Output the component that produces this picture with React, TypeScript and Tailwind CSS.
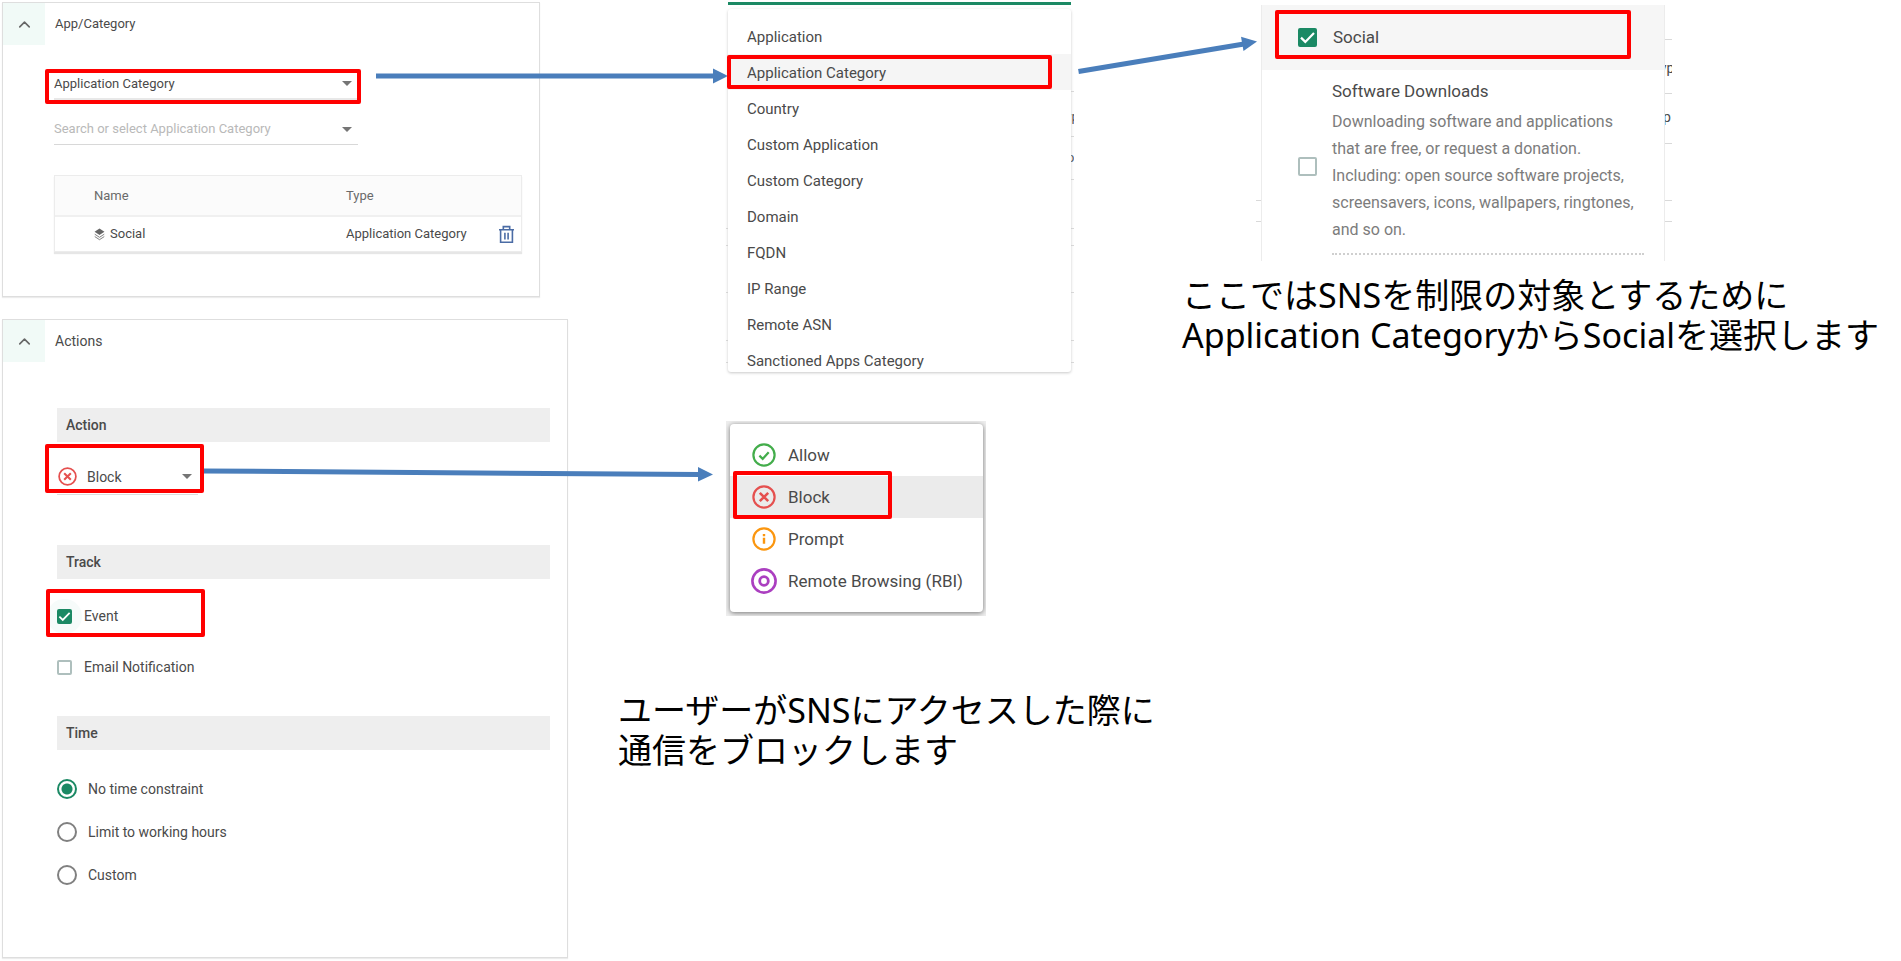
import { useState, type ReactNode } from "react";
import { ChevronUp } from "lucide-react";
import clsx from "clsx";

const CATEGORY_OPTIONS = [
  "Application",
  "Application Category",
  "Country",
  "Custom Application",
  "Custom Category",
  "Domain",
  "FQDN",
  "IP Range",
  "Remote ASN",
  "Sanctioned Apps Category",
];

const TIME_OPTIONS = ["No time constraint", "Limit to working hours", "Custom"];

function Caret() {
  return (
    <svg viewBox="0 0 10 5" className="pointer-events-none absolute right-[6px] h-[5px] w-[10px]" aria-hidden="true">
      <path d="M0 0h10L5 5z" fill="#757575" />
    </svg>
  );
}

// Red frame around the control the reader has to look at
function Highlight({ className }: { className: string }) {
  return (
    <span
      aria-hidden="true"
      className={clsx("pointer-events-none absolute z-10 rounded-[2px] border-4 border-[#ff0000]", className)}
    />
  );
}

function AllowIcon() {
  return (
    <svg viewBox="0 0 24 24" className="size-6" fill="none" stroke="#43ad4b" strokeWidth="2.2" aria-hidden="true">
      <circle cx="12" cy="12" r="10.6" />
      <path d="M7.4 12.6l3.3 3.2 6-6.6" />
    </svg>
  );
}

function BlockIcon({ className }: { className: string }) {
  return (
    <svg viewBox="0 0 24 24" className={className} fill="none" stroke="#e5504f" strokeWidth="2.2" aria-hidden="true">
      <circle cx="12" cy="12" r="10.6" />
      <path d="M7.8 7.800l8.400 8.400M16.200 7.800l-8.400 8.400" strokeWidth="2.6" />
    </svg>
  );
}

function PromptIcon() {
  return (
    <svg viewBox="0 0 24 24" className="size-6" fill="none" stroke="#fb960f" strokeWidth="2.2" aria-hidden="true">
      <circle cx="12" cy="12" r="10.6" />
      <path d="M12 10.8v6M12 7v2.2" strokeWidth="2.4" />
    </svg>
  );
}

function RemoteIcon() {
  return (
    <svg viewBox="0 0 26 26" className="-mx-px size-[26px]" fill="none" stroke="#ab3fc0" aria-hidden="true">
      <circle cx="13" cy="13" r="11.600" strokeWidth="2.6" />
      <circle cx="13" cy="13" r="4.3" strokeWidth="2.8" />
    </svg>
  );
}

function LayersIcon() {
  return (
    <svg viewBox="0 0 12 14" className="h-[14px] w-[11px]" aria-hidden="true">
      <path d="M6 1l5.4 3.6L6 8.2.6 4.6z" fill="#666" />
      <path d="M.8 7.2L6 10.6l5.2-3.4M.8 9.8L6 13.2l5.2-3.4" fill="none" stroke="#777" />
    </svg>
  );
}

function TrashIcon() {
  return (
    <svg viewBox="0 0 16 20" className="h-[19px] w-[15px]" fill="none" stroke="#4b6ca5" strokeWidth="1.7" aria-hidden="true">
      <path d="M0 5h16M4.6 5V1.6h6.8V5M1.7 5v13.2h12.6V5M6.3 8v7.2M9.7 8v7.2" />
    </svg>
  );
}

interface CheckboxProps {
  label: string;
  defaultChecked?: boolean;
  large?: boolean;
}

function Checkbox({ label, defaultChecked = false, large = false }: CheckboxProps) {
  const [checked, setChecked] = useState(defaultChecked);
  return (
    <span className={clsx("relative block shrink-0", large ? "size-[19px]" : "size-[15px]")}>
      <input
        type="checkbox"
        aria-label={label}
        checked={checked}
        onChange={(e) => setChecked(e.target.checked)}
        className="block size-full appearance-none rounded-[2px] border-2 border-[#aebfbd] bg-white checked:border-[#1b8964] checked:bg-[#1b8964]"
      />
      {checked && (
        <svg viewBox="0 0 19 19" className="pointer-events-none absolute inset-0 size-full" aria-hidden="true">
          <path d="M3 9.6l4.3 4.3L16 5" fill="none" stroke="#fff" strokeWidth="2.2" />
        </svg>
      )}
    </span>
  );
}

interface PanelProps {
  title: string;
  className: string;
  children: ReactNode;
}

function Panel({ title, className, children }: PanelProps) {
  return (
    <section className={clsx("border border-[#dedede] bg-white shadow-[0_1px_1px_#ececec]", className)}>
      <header className="flex items-center gap-[10px]">
        <button type="button" aria-label={`Collapse ${title}`} className="flex h-[42px] w-[42px] items-center justify-center bg-[#f1faf7]">
          <ChevronUp className="size-[19px] text-[#666]" strokeWidth={2} />
        </button>
        <h2>{title}</h2>
      </header>
      {children}
    </section>
  );
}

function SectionBar({ children }: { children: ReactNode }) {
  return <h3 className="flex h-[34px] items-center bg-[#eee] px-[9px] font-medium">{children}</h3>;
}

function AppCategoryPanel() {
  return (
    <Panel title="App/Category" className="mr-[28px] pb-[44px]">
      <div className="pt-[24px] pr-[17px] pl-[51px]">
        <div className="relative flex h-[31px] w-[304px] items-center border-b-2 border-[#e8e8e8]">
          <select aria-label="Object type" defaultValue="Application Category" className="w-full appearance-none outline-none">
            {CATEGORY_OPTIONS.map((name) => (
              <option key={name}>{name}</option>
            ))}
          </select>
          <Caret />
          <Highlight className="top-0 -right-[3px] -bottom-[6px] -left-[9px]" />
        </div>
        <div className="relative mt-[14px] flex h-[31px] w-[304px] items-center border-b border-[#d8d8d8]">
          <input
            type="text"
            aria-label="Application Category"
            placeholder="Search or select Application Category"
            className="w-full outline-none placeholder:text-[#b9b9b9]"
          />
          <Caret />
        </div>
        <div className="mt-[30px] border border-[#ececec] shadow-[0_2px_1px_#e6e6e6]">
          <table className="w-full table-fixed text-left">
            <thead>
              <tr className="h-[40px] border-b-2 border-[#f0f0f0] bg-[#fbfbfb] text-[#6a6a6a]">
                <th className="w-[291px] pl-[39px] font-normal">Name</th>
                <th className="font-normal">Type</th>
                <th className="w-[22px]" aria-label="Remove" />
              </tr>
            </thead>
            <tbody>
              <tr className="h-[35px]">
                <td className="pl-[39px]">
                  <span className="flex items-center gap-[5px]">
                    <LayersIcon />
                    Social
                  </span>
                </td>
                <td className="whitespace-nowrap">Application Category</td>
                <td>
                  <button type="button" aria-label="Remove Social" className="block">
                    <TrashIcon />
                  </button>
                </td>
              </tr>
            </tbody>
          </table>
        </div>
      </div>
    </Panel>
  );
}

function ActionsPanel() {
  return (
    <Panel title="Actions" className="pb-[72px] text-[14px]">
      <div className="pt-[46px] pr-[17px] pl-[54px]">
        <SectionBar>Action</SectionBar>
        <div className="relative mt-[17px] flex h-[36px] w-[141px] items-center border-b border-[#dcdcdc]">
          <BlockIcon className="absolute left-px size-[19px]" />
          <select aria-label="Action" defaultValue="Block" className="w-full appearance-none pl-[30px] outline-none">
            <option>Allow</option>
            <option>Block</option>
            <option>Prompt</option>
            <option>Remote Browsing (RBI)</option>
          </select>
          <Caret />
          <Highlight className="-top-[15px] -right-[6px] bottom-px -left-[12px]" />
        </div>

        <div className="mt-[50px]">
          <SectionBar>Track</SectionBar>
        </div>
        <label className="relative mt-[27px] flex h-[20px] w-fit items-center gap-[12px]">
          <span aria-hidden="true" className="absolute -left-[10px] size-[35px] rounded-full bg-[#f6fbfa]" />
          <Checkbox label="Event" defaultChecked />
          <span className="relative">Event</span>
          <Highlight className="-top-[17px] -bottom-[11px] -left-[11px] w-[159px]" />
        </label>
        <label className="mt-[31px] flex h-[20px] w-fit items-center gap-[12px]">
          <Checkbox label="Email Notification" />
          Email Notification
        </label>

        <div className="mt-[39px]">
          <SectionBar>Time</SectionBar>
        </div>
        <div className="mt-[29px] flex flex-col gap-[23px]">
          {TIME_OPTIONS.map((name, index) => (
            <label key={name} className="flex h-[20px] w-fit items-center gap-[11px]">
              <input
                type="radio"
                name="time"
                defaultChecked={index === 0}
                className="size-[20px] appearance-none rounded-full border-2 border-[#808080] bg-white checked:border-[#1b8964] checked:bg-[radial-gradient(circle,#1b8964_5px,white_6px)]"
              />
              {name}
            </label>
          ))}
        </div>
      </div>
    </Panel>
  );
}

// Hairlines of the page underneath, peeking out beside an open menu
function EdgeTicks({ tops, className }: { tops: number[]; className: string }) {
  return (
    <span aria-hidden="true" className={clsx("absolute top-0 h-full", className)}>
      {tops.map((top) => (
        <span key={top} className="absolute left-0 h-px w-full bg-[#d9d9d9]" style={{ top }} />
      ))}
    </span>
  );
}

function CategoryMenu() {
  return (
    <div className="relative ml-[110px] w-[343px] text-[15px] leading-[18px]">
      <svg viewBox="0 0 352 16" className="absolute top-[66px] right-full h-[16px] w-[352px]" aria-hidden="true">
        <path d="M0 8h338" stroke="#4a7ebb" strokeWidth="5" />
        <path d="M337 .5L352 8l-15 7.5z" fill="#4a7ebb" />
      </svg>
      <div className="h-[3px] bg-[#1b8964]" />
      <EdgeTicks tops={[226, 243, 290, 338, 360]} className="right-full w-[2px]" />
      <EdgeTicks tops={[89, 134, 177, 226, 243, 290, 338, 360]} className="left-full w-[3px]" />
      <span aria-hidden="true" className="absolute top-[106px] left-full w-[3px] overflow-hidden text-[13px]">
        <span className="-ml-[13px]">Type</span>
      </span>
      <span aria-hidden="true" className="absolute top-[147px] left-full w-[3px] overflow-hidden text-[13px]">
        <span className="-ml-[4px]">p</span>
      </span>
      <div role="listbox" aria-label="Object type" className="relative mt-[4px] flex flex-col rounded-[3px] bg-white pt-[9px] shadow-[0_1px_3px_#c9c9c9]">
        {CATEGORY_OPTIONS.map((name) => {
          const selected = name === "Application Category";
          return (
            <button
              key={name}
              type="button"
              role="option"
              aria-selected={selected}
              className={clsx("relative flex h-9 items-start pt-[10px] pl-[19px] text-left last:h-[30px]", selected && "bg-[#f5f5f5]")}
            >
              {name}
              {selected && <Highlight className="top-px right-[19px] bottom-px -left-px" />}
            </button>
          );
        })}
      </div>
    </div>
  );
}

const ACTION_OPTIONS = [
  { name: "Allow", icon: <AllowIcon /> },
  { name: "Block", icon: <BlockIcon className="size-6" /> },
  { name: "Prompt", icon: <PromptIcon /> },
  { name: "Remote Browsing (RBI)", icon: <RemoteIcon /> },
];

function ActionMenu() {
  return (
    <div className="relative mt-[49px] ml-[108px] w-[260px]">
      <svg viewBox="0 0 510 16" className="absolute top-[45px] right-full mr-[13px] h-[16px] w-[510px]" aria-hidden="true">
        <path d="M0 5l496 3.500" stroke="#4a7ebb" strokeWidth="5" />
        <path d="M495 1l15 7.5-15 7z" fill="#4a7ebb" />
      </svg>
      <div className="overflow-hidden bg-[#eee] pt-[3px] pr-[3px] pb-[4px] pl-[4px]">
        <div
          role="listbox"
          aria-label="Action"
          className="flex flex-col rounded-[4px] bg-white pt-[10px] pb-[10px] text-[17px] leading-[20px] shadow-[0_1px_5px_#777]"
        >
          {ACTION_OPTIONS.map(({ name, icon }) => {
            const selected = name === "Block";
            return (
              <button
                key={name}
                type="button"
                role="option"
                aria-selected={selected}
                className={clsx("relative flex h-[42px] items-center gap-[12px] pl-[22px]", selected && "bg-[#ebebeb]")}
              >
                {icon}
                {name}
                {selected && <Highlight className="-top-[5px] -bottom-px left-[3px] w-[159px]" />}
              </button>
            );
          })}
        </div>
      </div>
    </div>
  );
}

function CategoryList() {
  return (
    <div className="relative ml-[79px] w-[404px]">
      <svg viewBox="0 0 180 40" className="absolute top-[30px] right-full mr-[4px] h-[40px] w-[180px]" aria-hidden="true">
        <path d="M1.500 36.5L167 9" stroke="#4a7ebb" strokeWidth="5" />
        <path d="M164 1.800L180 6.500l-13.500 9.500z" fill="#4a7ebb" />
      </svg>
      <EdgeTicks tops={[195, 216]} className="right-full w-[5px]" />
      <EdgeTicks tops={[34, 88, 138, 195, 216]} className="left-full w-[7px]" />
      <span aria-hidden="true" className="absolute top-[54px] left-full w-[7px] overflow-hidden text-[14px]">
        <span className="-ml-[13px]">Type</span>
      </span>
      <span aria-hidden="true" className="absolute top-[103px] left-full w-[7px] overflow-hidden text-[14px]">
        <span className="-ml-[2px]">p</span>
      </span>
      <div className="relative border-x border-[#ececec] bg-white pb-[6px]">
        <label className="relative flex h-[65px] gap-[16px] bg-[#f6f6f6] pt-[23px] pl-[36px] text-[17px] leading-[19px]">
          <Checkbox label="Social" defaultChecked large />
          Social
          <Highlight className="top-[5px] bottom-[11px] left-[13px] w-[356px]" />
        </label>
        <label className="flex items-center gap-[15px] pt-[8px] pr-[20px] pl-[36px]">
          <Checkbox label="Software Downloads" large />
          <span className="flex-1 border-b-2 border-dotted border-[#cfcfcf] pb-[10px]">
            <span className="block text-[17px] leading-[27px]">Software Downloads</span>
            <span className="block pt-[3px] pr-[6px] text-[16px] leading-[27px] text-[#7c7c7c]">
              Downloading software and applications that are free, or request a donation. Including: open source software
              projects, screensavers, icons, wallpapers, ringtones, and so on.
            </span>
          </span>
        </label>
      </div>
    </div>
  );
}

function Caption({ className, children }: { className: string; children: ReactNode }) {
  return (
    <p className={clsx("font-['Noto_Sans','Noto_Sans_CJK_JP',sans-serif] text-[34px] leading-[40px] whitespace-nowrap text-black", className)}>
      {children}
    </p>
  );
}

export default function App() {
  return (
    <main className="grid min-h-screen grid-cols-[618fr_564fr_719fr] bg-white font-[Roboto,sans-serif] text-[13px] leading-[18px] text-[#4a4a4a]">
      <div className="flex min-w-0 flex-col gap-[22px] pt-[2px] pr-[50px] pl-[2px]">
        <AppCategoryPanel />
        <ActionsPanel />
      </div>
      <div className="min-w-0 pt-[2px]">
        <CategoryMenu />
        <ActionMenu />
        <Caption className="mt-[74px]">
          ユーザーがSNSにアクセスした際に
          <br />
          通信をブロックします
        </Caption>
      </div>
      <div className="min-w-0 pt-[5px]">
        <CategoryList />
        <Caption className="mt-[14px]">
          ここではSNSを制限の対象とするために
          <br />
          Application CategoryからSocialを選択します
        </Caption>
      </div>
    </main>
  );
}
